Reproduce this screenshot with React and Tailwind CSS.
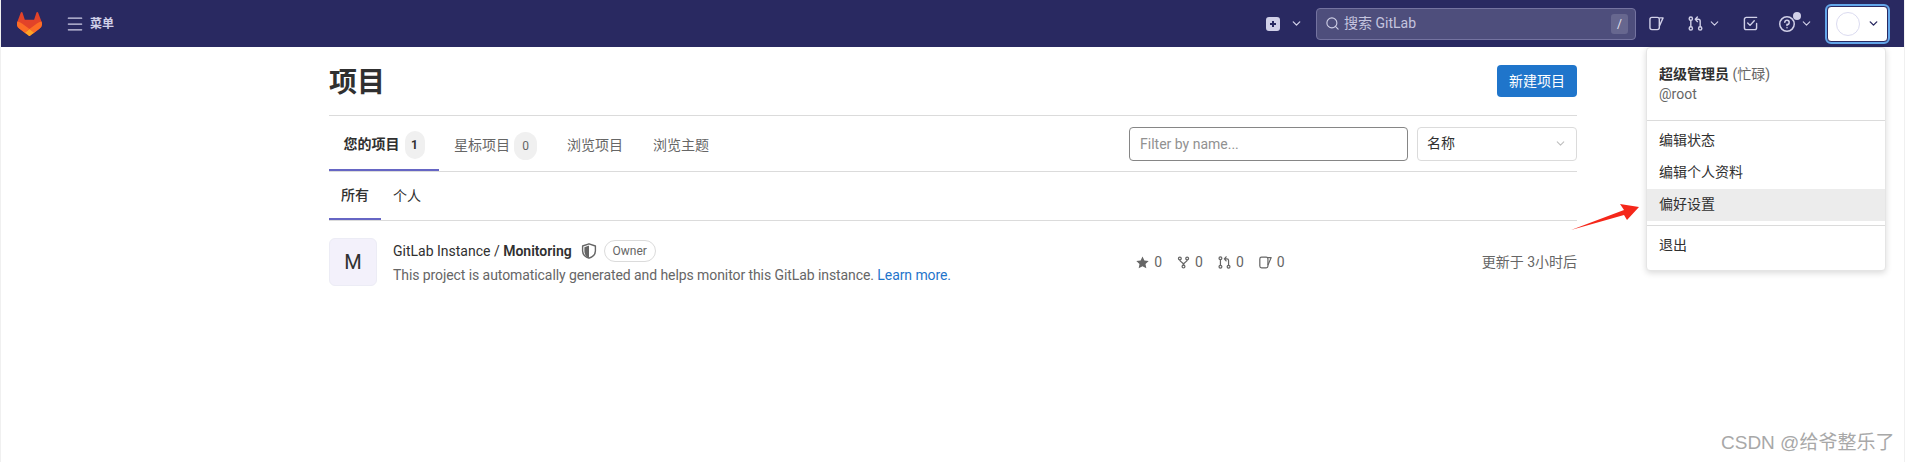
import { Search, ChevronDown, Menu } from "lucide-react";

const SANS = "font-['Roboto','Noto_Sans_CJK_SC',sans-serif]";

function Tanuki() {
  return (
    <svg width="25" height="24" viewBox="0 0 25 24" fill="none">
      <path d="m24.507 9.5-.034-.09L21.082.562a.896.896 0 0 0-1.694.091l-2.29 7.01H7.825L5.535.653a.898.898 0 0 0-1.694-.09L.451 9.411.416 9.5a6.297 6.297 0 0 0 2.09 7.278l.012.01.03.022 5.16 3.867 2.56 1.935 1.554 1.176a1.051 1.051 0 0 0 1.268 0l1.555-1.176 2.56-1.935 5.197-3.89.014-.01A6.297 6.297 0 0 0 24.507 9.5Z" fill="#E24329" />
      <path d="m24.507 9.5-.034-.09a11.44 11.44 0 0 0-4.56 2.051l-7.447 5.632 4.742 3.584 5.197-3.89.014-.01A6.297 6.297 0 0 0 24.507 9.5Z" fill="#FC6D26" />
      <path d="m7.707 20.677 2.56 1.935 1.555 1.176a1.051 1.051 0 0 0 1.268 0l1.555-1.176 2.56-1.935-4.743-3.584-4.755 3.584Z" fill="#FCA326" />
      <path d="M5.01 11.461a11.43 11.43 0 0 0-4.56-2.05L.416 9.5a6.297 6.297 0 0 0 2.09 7.278l.012.01.03.022 5.16 3.867 4.745-3.584-7.444-5.632Z" fill="#FC6D26" />
    </svg>
  );
}

function IssueIcon({ className }) {
  return (
    <svg className={className} viewBox="0 0 16 16" fill="none" stroke="currentColor" strokeWidth="1.5" strokeLinejoin="round">
      <rect x="1" y="1.5" width="10" height="13" rx="2.2" />
      <path d="M11 2h4l-4 9" />
    </svg>
  );
}

function MrIcon({ className }) {
  return (
    <svg className={className} viewBox="0 0 16 16" fill="none" stroke="currentColor" strokeWidth="1.5" strokeLinecap="round" strokeLinejoin="round">
      <circle cx="3" cy="2.8" r="1.75" />
      <circle cx="3" cy="13.2" r="1.75" />
      <circle cx="13" cy="13.2" r="1.75" />
      <path d="M3 4.8v6.4M13 11.2V5.5a2 2 0 0 0-2-2H8.2M10 1 7.8 3.5 10 6" />
    </svg>
  );
}

function ForkIcon({ className }) {
  return (
    <svg className={className} viewBox="0 0 16 16" fill="none" stroke="currentColor" strokeWidth="1.5" strokeLinecap="round">
      <circle cx="3.5" cy="3" r="1.75" />
      <circle cx="12.5" cy="3" r="1.75" />
      <circle cx="8" cy="13" r="1.75" />
      <path d="M3.5 5c0 2.5 4.5 2.5 4.5 6M12.5 5C12.5 7.5 8 7.5 8 11" />
    </svg>
  );
}

function TodoIcon({ className }) {
  return (
    <svg className={className} viewBox="0 0 16 16" fill="none" stroke="currentColor" strokeWidth="1.5" strokeLinecap="round" strokeLinejoin="round">
      <path d="M14.5 8v4.5a2 2 0 0 1-2 2h-9a2 2 0 0 1-2-2v-9a2 2 0 0 1 2-2h11" />
      <path d="m5 7.5 2.5 2.5L12 5" />
    </svg>
  );
}

function HelpIcon({ className }) {
  return (
    <svg className={className} viewBox="0 0 16 16" fill="none" stroke="currentColor" strokeWidth="1.5" strokeLinecap="round">
      <circle cx="8" cy="8" r="7.25" />
      <path d="M5.8 6.2A2.2 2.2 0 1 1 8 8.6v.9" />
      <path d="M8 11.7v.1" />
    </svg>
  );
}

function PlusSquare() {
  return (
    <svg width="14" height="14" viewBox="0 0 14 14">
      <path fillRule="evenodd" fill="#d1d0e8" d="M3 0h8a3 3 0 0 1 3 3v8a3 3 0 0 1-3 3H3a3 3 0 0 1-3-3V3a3 3 0 0 1 3-3Zm3 4v2H4v2h2v2h2V8h2V6H8V4H6Z" />
    </svg>
  );
}

function ShieldIcon() {
  return (
    <svg width="16" height="16" viewBox="0 0 16 16" fill="none">
      <path d="M8 .8 14.4 3v5c0 3.4-2.6 5.9-6.4 7.2C4.2 13.9 1.6 11.4 1.6 8V3L8 .8Z" stroke="#666" strokeWidth="1.4" strokeLinejoin="round" />
      <path d="M8 1v14c-2.8-1.2-4.6-3.6-4.6-7V4.2L8 2.6Z" fill="#666" />
    </svg>
  );
}

function StarIcon() {
  return (
    <svg width="13" height="13" viewBox="0 0 16 16" fill="#666">
      <path d="M8 .6l2.3 4.9 5.3.7-3.9 3.7 1 5.3L8 12.6l-4.7 2.6 1-5.3L.4 6.2l5.3-.7L8 .6Z" />
    </svg>
  );
}

function Stat({ icon, value }) {
  return (
    <span className="flex items-center gap-[5px] text-[#666] text-[14px]">
      {icon}
      {value}
    </span>
  );
}

function TabBadge({ children, active }) {
  return (
    <span className={`flex items-center justify-center h-[28px] rounded-full bg-[#f0f0f0] text-[12px] ${active ? "w-[20px] text-[#303030]" : "w-[23px] text-[#666]"}`}>
      {children}
    </span>
  );
}

export default function App() {
  return (
    <div className={`relative h-[462px] overflow-hidden bg-white border-x border-[#f0f0f0] ${SANS}`}>
      {/* Top navbar */}
      <header className="h-[47px] bg-[#292961] flex items-center text-[#d1d0e8]">
        <div className="ml-[16px]">
          <Tanuki />
        </div>
        <Menu className="ml-[23px] w-[20px] h-[20px]" strokeWidth={1.5} />
        <span className="ml-[5px] text-[12px] font-bold">菜单</span>

        <div className="ml-auto flex items-center">
          <PlusSquare />
          <ChevronDown className="ml-[10px] w-[13px] h-[13px]" strokeWidth={2.4} />
          <div className="ml-[13px] w-[320px] h-[32px] rounded-[4px] border border-[#7473a0] bg-[#4e4e7c] flex items-center pl-[8px] pr-[7px]">
            <Search className="w-[15px] h-[15px] text-[#cfcfe6]" strokeWidth={1.8} />
            <span className="ml-[4px] text-[14px] text-[#c5c4df]">搜索 GitLab</span>
            <span className="ml-auto w-[17px] h-[20px] rounded-[3px] bg-[#67678f] flex items-center justify-center text-[12px] text-[#e3e3f0]">/</span>
          </div>
          <IssueIcon className="ml-[13px] w-[15px] h-[15px]" />
          <MrIcon className="ml-[24px] w-[15px] h-[15px]" />
          <ChevronDown className="ml-[5px] w-[13px] h-[13px]" strokeWidth={2} />
          <TodoIcon className="ml-[22px] w-[15px] h-[15px]" />
          <div className="relative ml-[21px]">
            <HelpIcon className="w-[16px] h-[16px]" />
            <span className="absolute -top-[4px] -right-[6px] w-[8px] h-[8px] rounded-full bg-[#d1d0e8]" />
          </div>
          <ChevronDown className="ml-[5px] w-[13px] h-[13px]" strokeWidth={2} />
          <div className="ml-[14px] w-[61px] h-[36px] rounded-[4px] bg-white border border-[#292961] outline-2 outline-[#63a6e9] flex items-center pl-[8px]">
            <span className="w-[24px] h-[24px] rounded-full border border-[#dbdbf0]" />
            <ChevronDown className="ml-[7px] w-[13px] h-[13px] text-[#292961]" strokeWidth={2.6} />
          </div>
          <div className="w-[16px]" />
        </div>
      </header>

      {/* Page content */}
      <main className="w-[1248px] ml-[328px]">
        <div className="h-[69px] flex items-center justify-between border-b border-[#dbdbdb]">
          <h1 className="mt-[3px] text-[28px] font-bold text-[#303030]">项目</h1>
          <button className="w-[80px] h-[32px] rounded-[4px] bg-[#1f75cb] text-white text-[14px]">新建项目</button>
        </div>

        <div className="h-[56px] flex items-center border-b border-[#dbdbdb]">
          <nav className="flex items-center h-full text-[14px] text-[#666]">
            <a className="h-full w-[110px] pt-[4px] flex items-center justify-center gap-[5px] font-bold text-[#303030] border-b-2 border-[#6666c4]">
              您的项目
              <TabBadge active>1</TabBadge>
            </a>
            <a className="ml-[15px] pt-[4px] flex items-center gap-[4px]">
              星标项目
              <TabBadge>0</TabBadge>
            </a>
            <a className="ml-[30px] pt-[4px]">浏览项目</a>
            <a className="ml-[30px] pt-[4px]">浏览主题</a>
          </nav>
          <div className="ml-auto flex items-center gap-[9px]">
            <input
              placeholder="Filter by name..."
              className="mt-[1px] w-[279px] h-[34px] rounded-[4px] border border-[#868686] px-[10px] text-[14px] placeholder:text-[#919191]"
            />
            <div className="w-[160px] h-[34px] rounded-[4px] border border-[#dbdbdb] flex items-center justify-between pl-[9px] pr-[9px] text-[14px] text-[#303030]">
              名称
              <ChevronDown className="w-[13px] h-[13px] text-[#bfbfbf]" strokeWidth={2} />
            </div>
          </div>
        </div>

        <div className="h-[49px] flex items-center border-b border-[#dbdbdb] text-[14px] text-[#303030]">
          <a className="h-full w-[52px] flex items-center justify-center font-medium border-b-2 border-[#6666c4]">所有</a>
          <a className="ml-[12px]">个人</a>
        </div>

        <div className="flex items-start pt-[17px]">
          <div className="w-[48px] h-[48px] rounded-[6px] bg-[#f3f1fb] border border-[#ececf5] flex items-center justify-center text-[20px] text-[#303030]">M</div>
          <div className="ml-[16px]">
            <div className="flex items-center h-[26px] text-[14px] text-[#303030]">
              <span>GitLab Instance / <span className="font-semibold">Monitoring</span></span>
              <span className="ml-[9px]"><ShieldIcon /></span>
              <span className="ml-[7px] w-[52px] h-[22px] justify-center rounded-full border border-[#dbdbdb] flex items-center text-[12px] text-[#666]">Owner</span>
            </div>
            <p className="mt-[1px] text-[14px] leading-[20px] tracking-[-0.08px] text-[#666]">
              This project is automatically generated and helps monitor this GitLab instance. <a className="text-[#1f75cb]">Learn more.</a>
            </p>
          </div>
          <div className="ml-auto flex items-center pt-[14px]">
            <div className="flex items-center gap-[15px]">
              <Stat icon={<StarIcon />} value="0" />
              <Stat icon={<ForkIcon className="w-[13px] h-[13px]" />} value="0" />
              <Stat icon={<MrIcon className="w-[13px] h-[13px]" />} value="0" />
              <Stat icon={<IssueIcon className="w-[13px] h-[13px]" />} value="0" />
            </div>
            <span className="ml-[197px] text-[14px] text-[#666]">更新于 3小时后</span>
          </div>
        </div>
      </main>

      {/* User dropdown */}
      <div className="absolute left-[1645px] top-[47px] w-[240px] h-[224px] bg-white rounded-[4px] border border-[#e5e5e5] shadow-[0_2px_6px_rgba(0,0,0,0.15)] text-[14px] text-[#303030]">
        <div className="h-[73px] border-b border-[#dbdbdb] pl-[12px] pt-[16px]">
          <div className="leading-[20px]"><span className="font-bold">超级管理员</span> <span className="text-[#666]">(忙碌)</span></div>
          <div className="leading-[20px] text-[#666]">@root</div>
        </div>
        <div className="pt-[4px]">
          <div className="h-[32px] pl-[12px] pb-[2px] flex items-center">编辑状态</div>
          <div className="h-[32px] pl-[12px] pb-[2px] flex items-center">编辑个人资料</div>
          <div className="h-[32px] pl-[12px] pb-[2px] flex items-center bg-[#ececec]">偏好设置</div>
        </div>
        <div className="mt-[4px] border-t border-[#dbdbdb] pt-[4px]">
          <div className="h-[32px] pl-[12px] pb-[2px] flex items-center">退出</div>
        </div>
      </div>

      {/* Red annotation arrow */}
      <svg className="absolute left-[1569px] top-[200px]" width="72" height="34" viewBox="0 0 72 34">
        <path d="M1 30 54 10 50 4 69 7 57 20 54 15Z" fill="#f5271a" />
      </svg>

      {/* Watermark */}
      <span className="absolute left-[1720px] top-[429px] text-[19px] font-['Liberation_Sans','Noto_Sans_CJK_SC',sans-serif] text-[#a8a8a8]">CSDN @给爷整乐了</span>
    </div>
  );
}
